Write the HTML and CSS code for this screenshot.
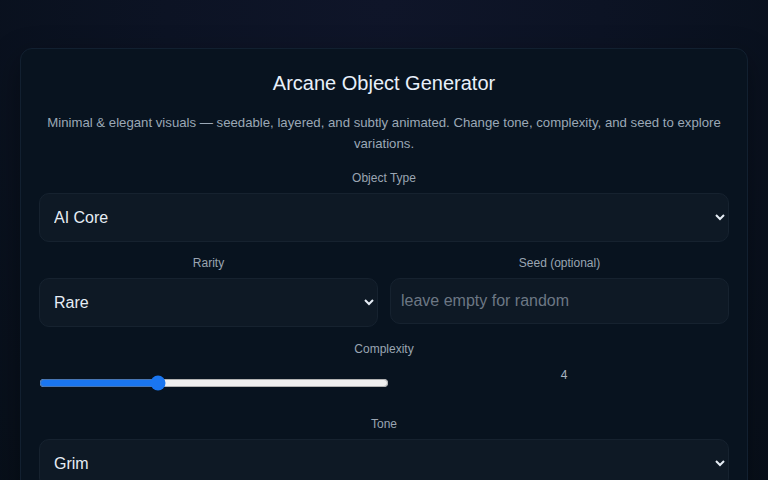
FILE: index.html
```html
<!DOCTYPE html>
<html lang="en">
<head>
<meta charset="utf-8">
<title>Arcane Object Generator</title>
<link rel="stylesheet" href="styles.css">
</head>
<body>
<main class="card">
  <h1 class="title">Arcane Object Generator</h1>
  <p class="desc">Minimal &amp; elegant visuals — seedable, layered, and subtly animated. Change tone, complexity, and seed to explore variations.</p>

  <div class="field field-type">
    <label class="label" for="type">Object Type</label>
    <select id="type" class="control">
      <option>AI Core</option>
      <option>Relic</option>
      <option>Talisman</option>
    </select>
  </div>

  <div class="two-col">
    <div class="field">
      <label class="label" for="rarity">Rarity</label>
      <select id="rarity" class="control">
        <option>Common</option>
        <option selected>Rare</option>
        <option>Legendary</option>
      </select>
    </div>
    <div class="field">
      <label class="label" for="seed">Seed (optional)</label>
      <input id="seed" class="control input" type="text" placeholder="leave empty for random">
    </div>
  </div>

  <div class="field field-complexity">
    <label class="label" for="complexity">Complexity</label>
    <div class="range-row">
      <input id="complexity" class="range" type="range" min="1" max="10" value="4">
      <span class="range-value">4</span>
    </div>
  </div>

  <div class="field field-tone">
    <label class="label" for="tone">Tone</label>
    <select id="tone" class="control">
      <option>Grim</option>
      <option>Serene</option>
      <option>Vivid</option>
    </select>
  </div>
</main>
</body>
</html>
```

FILE: styles.css
```css
html, body {
  margin: 0;
  padding: 0;
}
body {
  min-height: 100vh;
  background: radial-gradient(ellipse at 50% 0%, #0f1529 0%, #0c1324 40%, #070f19 100%);
  font-family: "Liberation Sans", Arial, sans-serif;
  color: #e6edf5;
  padding: 48px 20px 20px;
  box-sizing: border-box;
}
.card {
  background: #08131f;
  border: 1px solid #122030;
  border-radius: 12px;
  padding: 22px 18px 18px;
  display: flex;
  flex-direction: column;
  box-shadow: 0 10px 30px rgba(0, 0, 0, 0.35);
}
.title {
  margin: 0;
  font-size: 20px;
  font-weight: 400;
  line-height: 24px;
  text-align: center;
  color: #e8f0fa;
}
.desc {
  margin: 17px 0 0;
  font-size: 13.2px;
  line-height: 21px;
  text-align: center;
  color: #9ba8b6;
}
.field {
  display: flex;
  flex-direction: column;
  gap: 8px;
  min-width: 0;
}
.field-type {
  margin-top: 17px;
}
.two-col {
  margin-top: 14px;
  display: grid;
  grid-template-columns: 1fr 1fr;
  gap: 12px;
}
.field-complexity {
  margin-top: 15px;
}
.field-tone {
  margin-top: 15px;
}
.label {
  font-size: 12px;
  line-height: 14px;
  text-align: center;
  color: #9aa5b2;
}
.control {
  font-family: "Liberation Sans", Arial, sans-serif;
  font-size: 16px;
  color: #e6edf5;
  background: #0e1925;
  border: 1px solid #16222f;
  border-radius: 10px;
  padding: 14px 10px;
  width: 100%;
  box-sizing: border-box;
  outline: none;
  color-scheme: dark;
}
.input {
  padding: 13px 10px;
  line-height: 18px;
}
.input::placeholder {
  color: #6c7784;
}
.range-row {
  display: grid;
  grid-template-columns: 350px 1fr;
  gap: 10px;
  align-items: start;
}
.range {
  margin: 11px 0;
  width: 100%;
  height: 16px;
  accent-color: #1a76f0;
}
.range-value {
  padding-top: 4px;
  font-size: 12px;
  line-height: 14px;
  text-align: center;
  color: #a9b4c1;
}
```
